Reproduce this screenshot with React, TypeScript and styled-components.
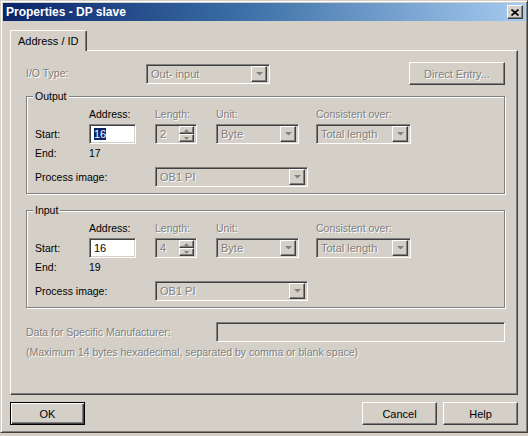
import React from 'react';
import styled, { createGlobalStyle, css } from 'styled-components';

const Global = createGlobalStyle`
  html, body { margin: 0; padding: 0; background: #d4d0c8; }
  body { font-family: "Liberation Sans", Arial, sans-serif; font-size: 10.5px; color: #000; }
  * { box-sizing: border-box; }
`;

const raised = css`
  border: 1px solid;
  border-color: #ffffff #404040 #404040 #ffffff;
  box-shadow: inset -1px -1px 0 #808080;
  background: #d4d0c8;
`;

const sunken = css`
  border: 1px solid;
  border-color: #808080 #ffffff #ffffff #808080;
  box-shadow: inset 1px 1px 0 #404040, inset -1px -1px 0 #d4d0c8;
`;

const disabledText = css`
  color: #808080;
  text-shadow: 1px 1px 0 #ffffff;
`;

const Window = styled.div`
  width: 528px;
  height: 433px;
  background: #d4d0c8;
  border: 1px solid;
  border-color: #d4d0c8 #404040 #404040 #d4d0c8;
  box-shadow: inset 1px 1px 0 #ffffff, inset -1px -1px 0 #808080;
  padding: 2px;
  display: flex;
  flex-direction: column;
`;

const TitleBar = styled.div`
  height: 18px;
  background: linear-gradient(to right, #0a246a 0%, #3a6ea5 45%, #a6caf0 100%);
  display: flex;
  align-items: center;
  padding: 0 2px 0 3px;
`;

const Title = styled.span`
  flex: 1;
  color: #ffffff;
  font-weight: bold;
  font-size: 12px;
  white-space: nowrap;
`;

const CloseButton = styled.div`
  ${raised};
  width: 16px;
  height: 14px;
  display: flex;
  align-items: center;
  justify-content: center;
`;

const Client = styled.div`
  flex: 1;
  display: flex;
  flex-direction: column;
  padding: 9px 7px 0 7px;
`;

const TabStrip = styled.div`
  display: flex;
  height: 20px;
  position: relative;
  z-index: 1;
`;

const Tab = styled.div`
  height: 21px;
  padding: 0 7px;
  display: flex;
  align-items: center;
  background: #d4d0c8;
  border-top: 1px solid #ffffff;
  border-left: 1px solid #ffffff;
  border-right: 1px solid #404040;
  box-shadow: inset -1px 0 0 #808080;
  border-radius: 2px 2px 0 0;
  white-space: nowrap;
  font-size: 11px;
`;

const Panel = styled.div`
  height: 345px;
  border: 1px solid;
  border-color: #ffffff #404040 #404040 #ffffff;
  box-shadow: inset -1px -1px 0 #808080;
  padding: 11px 12px 0 15px;
  display: flex;
  flex-direction: column;
`;

const TopRow = styled.div`
  height: 23px;
  display: flex;
  align-items: center;
`;

const Text = styled.span<{ $disabled?: boolean; $width?: number }>`
  ${p => (p.$disabled ? disabledText : '')};
  white-space: nowrap;
  line-height: 13px;
  ${p => (p.$width ? `width: ${p.$width}px; flex: none;` : '')};
`;

const PushButton = styled.div<{ $disabled?: boolean; $width: number; $default?: boolean }>`
  ${raised};
  width: ${p => p.$width}px;
  height: 23px;
  display: flex;
  align-items: center;
  justify-content: center;
  white-space: nowrap;
  font-size: 11px;
  ${p => (p.$disabled ? disabledText : '')};
  ${p =>
    p.$default
      ? css`
          border: 1px solid #000000;
          box-shadow: inset 1px 1px 0 #ffffff, inset -1px -1px 0 #404040, inset -2px -2px 0 #808080;
        `
      : ''};
`;

const PushRight = styled(PushButton)`
  margin-left: auto;
`;

const ComboBox = styled.div<{ $width: number; $white?: boolean }>`
  ${sunken};
  width: ${p => p.$width}px;
  height: 20px;
  padding: 2px 2px 2px 4px;
  display: flex;
  align-items: center;
  background: ${p => (p.$white ? '#ffffff' : '#d4d0c8')};
`;

const BoxText = styled.span<{ $disabled?: boolean }>`
  flex: 1;
  white-space: nowrap;
  overflow: hidden;
  font-size: 11px;
  ${p => (p.$disabled ? disabledText : '')};
`;

const ArrowButton = styled.div`
  ${raised};
  width: 16px;
  height: 16px;
  flex: none;
  display: flex;
  align-items: center;
  justify-content: center;
`;

const SpinWrap = styled.div`
  width: 15px;
  height: 16px;
  flex: none;
  display: flex;
  flex-direction: column;
`;

const SpinHalf = styled.div`
  ${raised};
  flex: 1;
  display: flex;
  align-items: center;
  justify-content: center;
`;

const Selected = styled.span`
  background: #0a246a;
  color: #ffffff;
`;

const Group = styled.div<{ $top: number }>`
  position: relative;
  margin-top: ${p => p.$top}px;
  border: 1px solid #808080;
  box-shadow: inset 1px 1px 0 #ffffff, 1px 1px 0 #ffffff;
  padding: 11px 8px 6px 8px;
`;

const Legend = styled.span`
  position: absolute;
  top: -7px;
  left: 6px;
  padding: 0 2px;
  background: #d4d0c8;
  line-height: 13px;
`;

const GroupGrid = styled.div`
  display: grid;
  grid-template-columns: 54px 66px 61px 100px 1fr;
  grid-template-rows: 13px 20px 13px 24px;
  row-gap: 3px;
  align-items: center;
`;

const ProcessLabel = styled(Text)`
  grid-column: 1 / span 2;
  align-self: end;
  margin-bottom: 3px;
`;

const ProcessCell = styled.div`
  grid-column: 3 / span 3;
  align-self: end;
`;

const DataRow = styled.div`
  margin-top: 14px;
  height: 20px;
  display: flex;
  align-items: center;
`;

const DataBox = styled.div`
  ${sunken};
  flex: 1;
  height: 20px;
  background: #d4d0c8;
`;

const Hint = styled(Text)`
  margin-top: 4px;
`;

const ButtonRow = styled.div`
  margin-top: 7px;
  display: flex;
  gap: 6px;
`;

const Spacer = styled.div`
  flex: 1;
`;

const DownArrow = () => (
  <svg width="7" height="4" viewBox="0 0 7 4">
    <path d="M0 0h7L3.5 3.5z" fill="#808080" />
  </svg>
);

const Combo = ({ width, value, white }: { width: number; value: string; white?: boolean }) => (
  <ComboBox $width={width} $white={white}>
    <BoxText $disabled>{value}</BoxText>
    <ArrowButton>
      <DownArrow />
    </ArrowButton>
  </ComboBox>
);

const Spinner = ({ value }: { value: string }) => (
  <ComboBox $width={42}>
    <BoxText $disabled>{value}</BoxText>
    <SpinWrap>
      <SpinHalf>
        <svg width="5" height="3" viewBox="0 0 5 3">
          <path d="M0 3h5L2.5 0z" fill="#808080" />
        </svg>
      </SpinHalf>
      <SpinHalf>
        <svg width="5" height="3" viewBox="0 0 5 3">
          <path d="M0 0h5L2.5 3z" fill="#808080" />
        </svg>
      </SpinHalf>
    </SpinWrap>
  </ComboBox>
);

const AddressBox = ({ value, selected }: { value: string; selected?: boolean }) => (
  <ComboBox $width={47} $white>
    <BoxText>{selected ? <Selected>{value}</Selected> : value}</BoxText>
  </ComboBox>
);

type GroupProps = { title: string; top: number; length: string; end: string; selected?: boolean };

const IOGroup = ({ title, top, length, end, selected }: GroupProps) => (
  <Group $top={top}>
    <Legend>{title}</Legend>
    <GroupGrid>
      <span />
      <Text>Address:</Text>
      <Text $disabled>Length:</Text>
      <Text $disabled>Unit:</Text>
      <Text $disabled>Consistent over:</Text>

      <Text>Start:</Text>
      <AddressBox value="16" selected={selected} />
      <Spinner value={length} />
      <Combo width={83} value="Byte" />
      <Combo width={95} value="Total length" />

      <Text>End:</Text>
      <Text>{end}</Text>
      <span />
      <span />
      <span />

      <ProcessLabel>Process image:</ProcessLabel>
      <ProcessCell>
        <Combo width={153} value="OB1 PI" />
      </ProcessCell>
    </GroupGrid>
  </Group>
);

export default function App() {
  return (
    <>
      <Global />
      <Window>
        <TitleBar>
          <Title>Properties - DP slave</Title>
          <CloseButton>
            <svg width="8" height="7" viewBox="0 0 8 7">
              <path d="M0.5 0.5L7.5 6.5M7.5 0.5L0.5 6.5" stroke="#000" strokeWidth="1.6" />
            </svg>
          </CloseButton>
        </TitleBar>
        <Client>
          <TabStrip>
            <Tab>Address / ID</Tab>
          </TabStrip>
          <Panel>
            <TopRow>
              <Text $disabled $width={120}>I/O Type:</Text>
              <Combo width={124} value="Out- input" />
              <PushRight $disabled $width={96}>Direct Entry...</PushRight>
            </TopRow>
            <IOGroup title="Output" top={11} length="2" end="17" selected />
            <IOGroup title="Input" top={16} length="4" end="19" />
            <DataRow>
              <Text $disabled $width={190}>Data for Specific Manufacturer:</Text>
              <DataBox />
            </DataRow>
            <Hint $disabled>(Maximum 14 bytes hexadecimal, separated by comma or blank space)</Hint>
          </Panel>
          <ButtonRow>
            <PushButton $width={75} $default>OK</PushButton>
            <Spacer />
            <PushButton $width={75}>Cancel</PushButton>
            <PushButton $width={75}>Help</PushButton>
          </ButtonRow>
        </Client>
      </Window>
    </>
  );
}
